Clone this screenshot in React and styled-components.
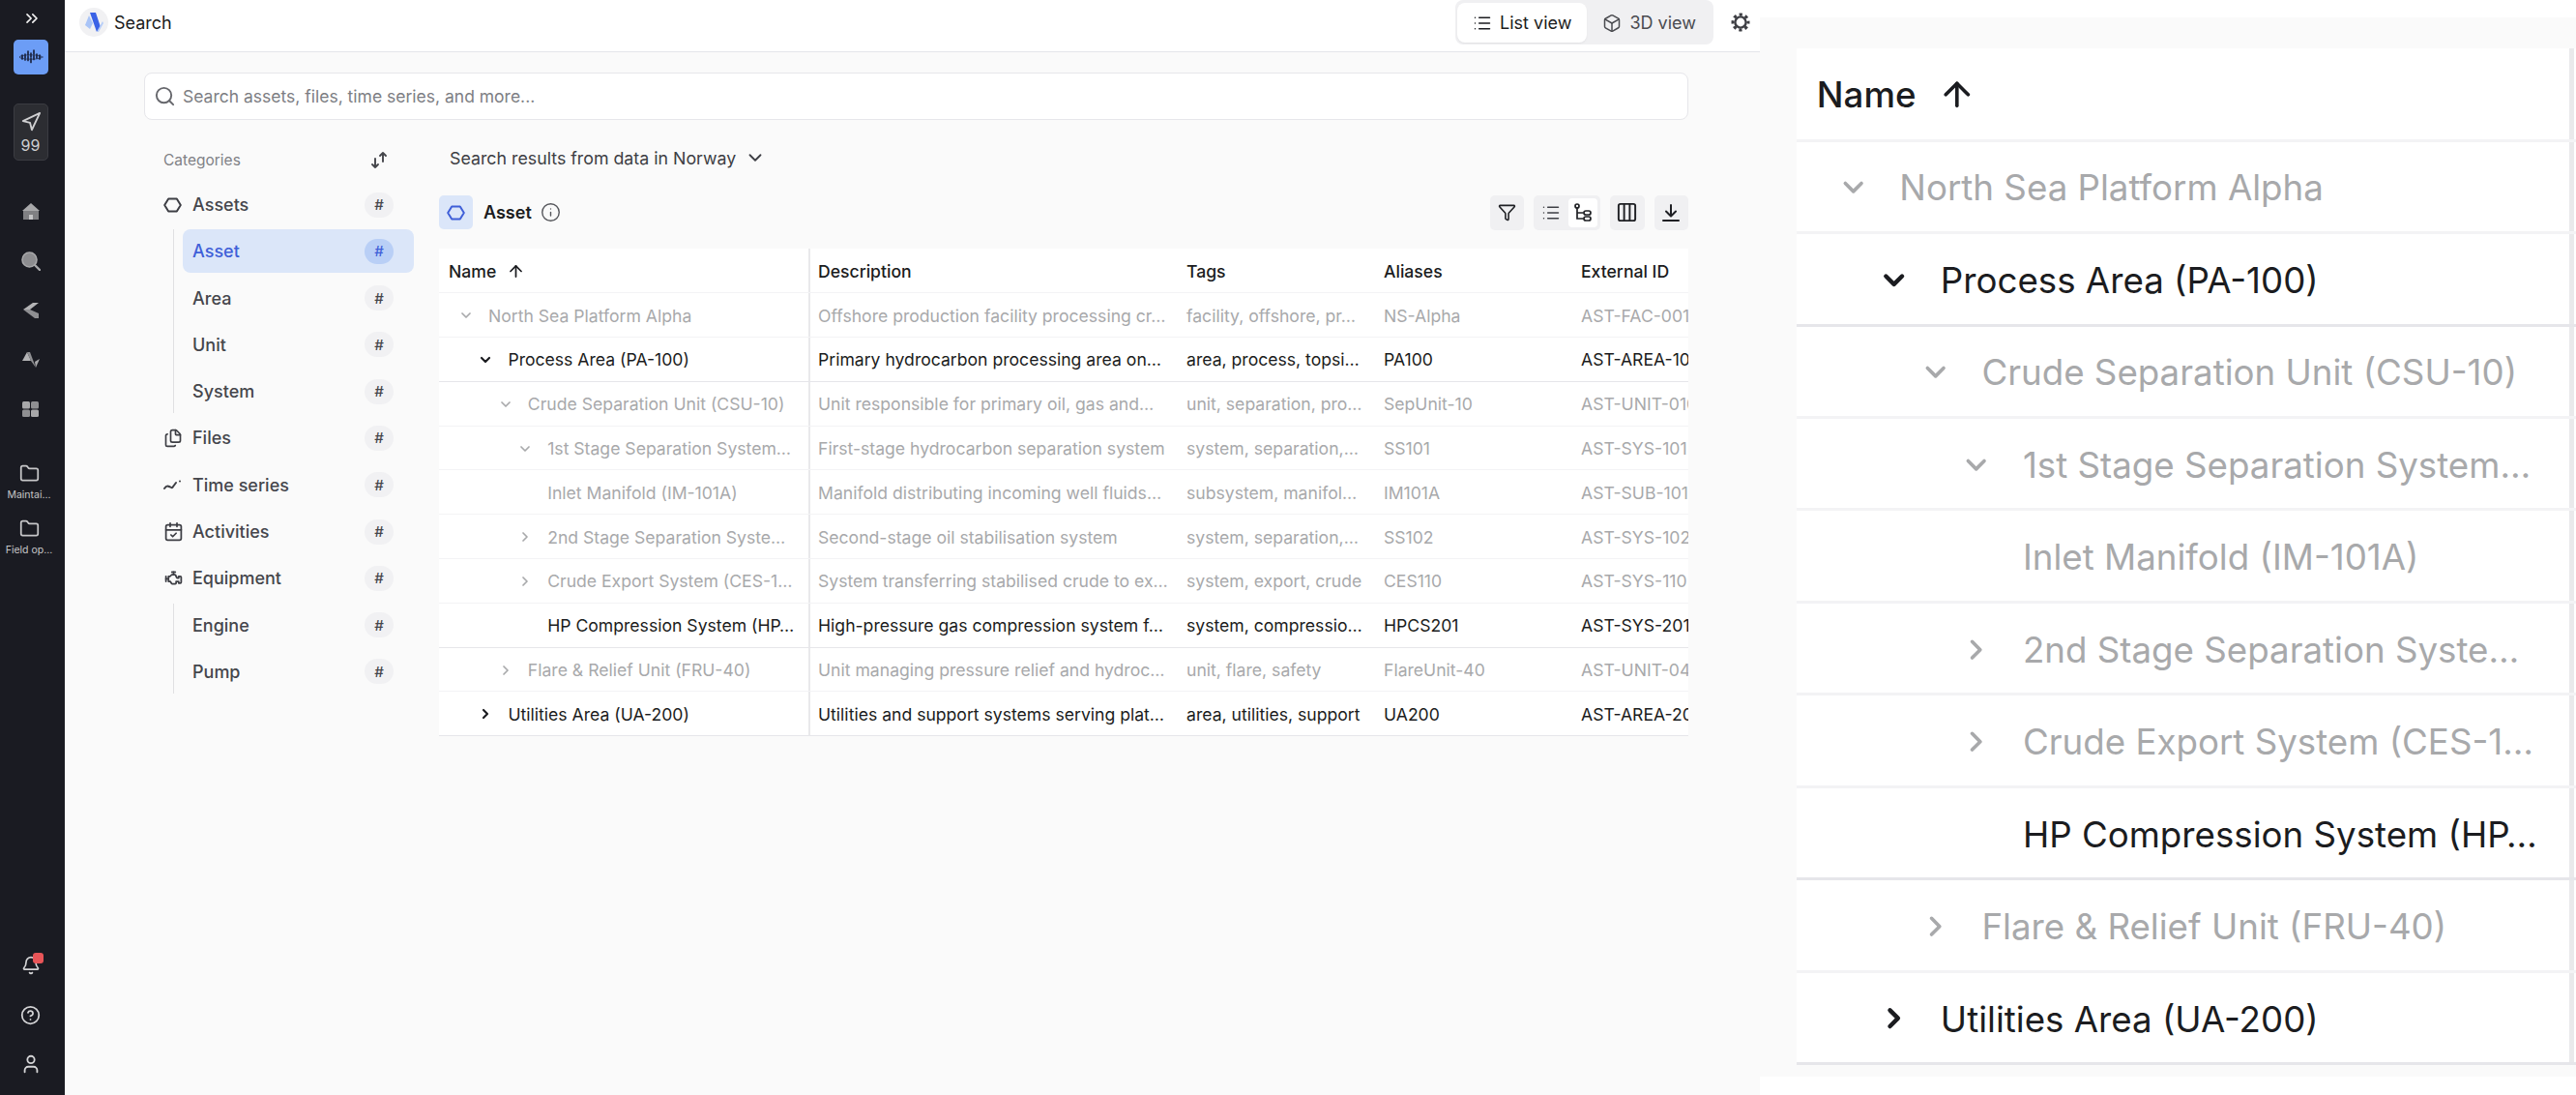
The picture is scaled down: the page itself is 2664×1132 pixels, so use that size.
import React from 'react';
import styled, { createGlobalStyle } from 'styled-components';
import {
  ArrowUp,
  Bell,
  Box,
  CalendarCheck,
  ChevronDown,
  ChevronRight,
  ChevronsRight,
  CircleHelp,
  Columns3,
  Files,
  Folder,
  Funnel,
  Info,
  List,
  Navigation,
  Search,
  User,
} from 'lucide-react';
import { TbEngine } from 'react-icons/tb';

const CATEGORIES = [
  { name: 'Assets', icon: 'hex', children: ['Asset', 'Area', 'Unit', 'System'] },
  { name: 'Files', icon: 'files' },
  { name: 'Time series', icon: 'series' },
  { name: 'Activities', icon: 'activities' },
  { name: 'Equipment', icon: 'equipment', children: ['Engine', 'Pump'] },
];

const ROWS = [
  { level: 0, open: true, dim: true, name: 'North Sea Platform Alpha', desc: 'Offshore production facility processing cr…', tags: 'facility, offshore, pr…', alias: 'NS-Alpha', id: 'AST-FAC-001' },
  { level: 1, open: true, name: 'Process Area (PA-100)', desc: 'Primary hydrocarbon processing area on…', tags: 'area, process, topsi…', alias: 'PA100', id: 'AST-AREA-100' },
  { level: 2, open: true, dim: true, name: 'Crude Separation Unit (CSU-10)', desc: 'Unit responsible for primary oil, gas and…', tags: 'unit, separation, pro…', alias: 'SepUnit-10', id: 'AST-UNIT-010' },
  { level: 3, open: true, dim: true, name: '1st Stage Separation System…', desc: 'First-stage hydrocarbon separation system', tags: 'system, separation,…', alias: 'SS101', id: 'AST-SYS-101' },
  { level: 3, leaf: true, dim: true, name: 'Inlet Manifold (IM-101A)', desc: 'Manifold distributing incoming well fluids…', tags: 'subsystem, manifol…', alias: 'IM101A', id: 'AST-SUB-101' },
  { level: 3, dim: true, name: '2nd Stage Separation Syste…', desc: 'Second-stage oil stabilisation system', tags: 'system, separation,…', alias: 'SS102', id: 'AST-SYS-102' },
  { level: 3, dim: true, name: 'Crude Export System (CES-1…', desc: 'System transferring stabilised crude to ex…', tags: 'system, export, crude', alias: 'CES110', id: 'AST-SYS-110' },
  { level: 3, leaf: true, name: 'HP Compression System (HP…', desc: 'High-pressure gas compression system f…', tags: 'system, compressio…', alias: 'HPCS201', id: 'AST-SYS-201' },
  { level: 2, dim: true, name: 'Flare & Relief Unit (FRU-40)', desc: 'Unit managing pressure relief and hydroc…', tags: 'unit, flare, safety', alias: 'FlareUnit-40', id: 'AST-UNIT-040' },
  { level: 1, name: 'Utilities Area (UA-200)', desc: 'Utilities and support systems serving plat…', tags: 'area, utilities, support', alias: 'UA200', id: 'AST-AREA-200' },
];

const GlobalStyle = createGlobalStyle`
  html, body {
    margin: 0;
    padding: 0;
    background: #fff;
  }
  body {
    font-family: Inter, "Liberation Sans", sans-serif;
    color: #1b1c20;
  }
  * {
    box-sizing: border-box;
  }
`;

const Page = styled.div`
  display: flex;
  width: 2664px;
  height: 1132px;
  overflow: hidden;
`;

const Sidebar = styled.nav`
  flex: 0 0 67px;
  display: flex;
  flex-direction: column;
  align-items: center;
  padding: 9px 4px 0 0;
  background: #1a1b22;
  color: #d4d4d6;
`;

const Collapse = styled.div`
  height: 32px;
  margin-left: 3px;
  display: flex;
  color: #f2f2f2;
`;

const BrandButton = styled.div`
  width: 36px;
  height: 36px;
  display: flex;
  align-items: center;
  justify-content: center;
  border-radius: 5px;
  background: #6c9df6;
`;

const SendBox = styled.div`
  width: 36px;
  height: 59px;
  margin-top: 30px;
  padding-top: 7px;
  display: flex;
  flex-direction: column;
  align-items: center;
  gap: 3px;
  border: 1px solid #3b3c42;
  border-radius: 5px;
  background: #2c2d32;
  font-size: 16px;
  color: #cfcfd1;
`;

const AppIcons = styled.div`
  margin-top: 43px;
  display: flex;
  flex-direction: column;
  align-items: center;
  gap: 31px;
  color: #a3a3a5;
`;

const IconSlot = styled.div`
  height: ${p => p.$height || 20}px;
  display: flex;
  align-items: center;
  justify-content: center;
`;

const Shortcuts = styled.div`
  margin-top: 46px;
  display: flex;
  flex-direction: column;
  gap: 18px;
`;

const Shortcut = styled.div`
  width: 56px;
  display: flex;
  flex-direction: column;
  align-items: center;
  gap: 5px;
  padding-right: 3px;
  font-size: 10.5px;
  line-height: 13px;
  color: #c6c6c8;
  white-space: nowrap;
`;

const SideFooter = styled.div`
  margin-top: auto;
  padding-bottom: 21px;
  display: flex;
  flex-direction: column;
  align-items: center;
  gap: 29px;
`;

const BellWrap = styled.div`
  position: relative;
  height: 22px;
  display: flex;
  align-items: center;
`;

const RedDot = styled.span`
  position: absolute;
  top: -2px;
  right: -3px;
  width: 11px;
  height: 11px;
  border-radius: 3px;
  background: #e85558;
`;

const Workspace = styled.div`
  flex: 0 0 1753px;
  display: flex;
  flex-direction: column;
  background: #fafafa;
`;

const TopBar = styled.header`
  height: 54px;
  flex: none;
  display: flex;
  align-items: flex-start;
  padding-left: 15px;
  border-bottom: 1px solid #e4e5ea;
  background: #fff;
`;

const Brand = styled.div`
  height: 46px;
  display: flex;
  align-items: center;
  gap: 6px;
  font-size: 18px;
`;

const LogoCircle = styled.div`
  width: 30px;
  height: 30px;
  display: flex;
  align-items: center;
  justify-content: center;
  border-radius: 50%;
  background: #f1f1f3;
`;

const ViewSwitch = styled.div`
  margin-left: auto;
  height: 46px;
  display: flex;
  padding: 3px 2px;
  border-radius: 8px;
  background: #f0f0f2;
`;

const ViewTab = styled.div`
  height: 41px;
  display: flex;
  align-items: center;
  gap: 8px;
  padding: 0 16px;
  border-radius: 8px;
  font-size: 18px;
  color: ${p => (p.$active ? '#1b1c20' : '#4a4b50')};
  background: ${p => (p.$active ? '#fff' : 'transparent')};
  box-shadow: ${p => (p.$active ? '0 1px 2px rgba(0, 0, 0, 0.06)' : 'none')};
`;

const GearSlot = styled.div`
  width: 48px;
  height: 46px;
  padding-left: 8px;
  display: flex;
  align-items: center;
  justify-content: center;
  color: #3d3e43;
`;

const SearchBox = styled.div`
  width: 1597px;
  height: 49px;
  margin: 21px 0 0 82px;
  padding-left: 9px;
  flex: none;
  display: flex;
  align-items: center;
  gap: 7px;
  border: 1px solid #e6e6ea;
  border-radius: 8px;
  background: #fff;
  font-size: 17.5px;
  color: #7d7e83;

  svg {
    color: #66676c;
  }
`;

const Body = styled.div`
  margin: 20px 0 0 102px;
  display: flex;
`;

const CategoryPanel = styled.aside`
  width: 285px;
  flex: none;
  display: flex;
  flex-direction: column;
`;

const CategoryHead = styled.div`
  width: 259px;
  height: 42px;
  margin-bottom: 3px;
  padding-right: 26px;
  display: flex;
  align-items: center;
  justify-content: space-between;
  font-size: 15.5px;
  color: #808186;
`;

const CategoryList = styled.div`
  width: 259px;
  display: flex;
  flex-direction: column;
  gap: 3.3px;
`;

const CategoryRow = styled.div`
  height: 45px;
  display: flex;
  align-items: center;
  padding: 0 21px 0 ${p => (p.$sub ? '10px' : '0')};
  border-radius: 8px;
  font-size: 18px;
  font-weight: 500;
  color: ${p => (p.$active ? '#3f5fd8' : '#45464c')};
  background: ${p => (p.$active ? '#dbe6f9' : 'transparent')};
`;

const CategoryIcon = styled.span`
  width: 30px;
  display: flex;
  color: #3d3e44;
`;

const CountBadge = styled.span`
  width: 30px;
  height: 26px;
  margin-left: auto;
  display: flex;
  align-items: center;
  justify-content: center;
  border-radius: 13px;
  font-size: 15px;
  font-weight: 500;
  color: ${p => (p.$active ? '#3f5fd8' : '#45464b')};
  background: ${p => (p.$active ? '#b9cff6' : '#f1f1f3')};
`;

const SubList = styled.div`
  margin-left: 10px;
  padding-left: 9px;
  display: flex;
  flex-direction: column;
  gap: 3.3px;
  border-left: 1.5px solid #e0e0e2;
`;

const Results = styled.section`
  width: 1292px;
  flex: none;
`;

const ScopeLine = styled.div`
  height: 38px;
  padding-left: 11px;
  display: flex;
  align-items: center;
  gap: 9px;
  font-size: 17.8px;
  color: #3d3e44;
`;

const ResultBar = styled.div`
  height: 35px;
  margin: 20px 0;
  display: flex;
  align-items: center;
`;

const TypeBox = styled.div`
  width: 35px;
  height: 35px;
  display: flex;
  align-items: center;
  justify-content: center;
  border-radius: 5px;
  background: #dbe6f9;
  color: #3f5fd8;
`;

const TypeName = styled.strong`
  margin: 0 9px 0 11px;
  font-size: 18px;
  font-weight: 600;
`;

const Tools = styled.div`
  margin-left: auto;
  display: flex;
  gap: 10px;
`;

const ToolButton = styled.div`
  width: 35.5px;
  height: 36px;
  display: flex;
  align-items: center;
  justify-content: center;
  border-radius: 5px;
  background: #f0f0f2;
  color: #1f2024;
`;

const ToolToggle = styled.div`
  width: 69px;
  height: 36px;
  padding: 3px;
  display: flex;
  align-items: center;
  justify-content: space-between;
  border-radius: 5px;
  background: #f0f0f2;
  color: #3d3e44;
`;

const TogglePart = styled.span`
  width: 30px;
  height: 30px;
  display: flex;
  align-items: center;
  justify-content: center;
  border-radius: 4px;
  color: ${p => (p.$active ? '#1f2024' : '#3d3e44')};
  background: ${p => (p.$active ? '#fff' : 'transparent')};
`;

/* the same table is drawn twice, --s is the magnification */
const TableFrame = styled.div`
  --s: ${p => p.$scale};
  --name: ${p => p.$nameWidth}px;
  width: ${p => p.$width}px;
  overflow: hidden;
  background: #fff;
`;

const TableRow = styled.div`
  display: grid;
  grid-template-columns: var(--name) 381px 204px 204px 204px;
  height: calc(${p => (p.$head ? 46.3 : 45.8)}px * var(--s));
  padding-top: calc(1px * var(--s));
  border-bottom: calc(1.5px * var(--s)) solid ${p => (p.$strong ? '#e6e6ea' : '#f3f3f5')};
  font-size: calc(17.6px * var(--s));
  font-weight: ${p => (p.$head ? 500 : 400)};
  color: ${p => (p.$dim ? '#a8a9ab' : '#1b1c20')};
`;

const Cell = styled.div`
  display: flex;
  align-items: center;
  padding-left: 8px;
  overflow: hidden;
  white-space: nowrap;
`;

const NameCell = styled.div`
  display: flex;
  align-items: center;
  margin-top: calc(-1px * var(--s));
  padding: calc(1px * var(--s)) 0 0 calc(${p => 20 + p.$level * 20.4}px * var(--s));
  border-right: calc(2.7px * var(--s)) solid #e9e9eb;
  overflow: hidden;
  white-space: nowrap;
`;

const HeadName = styled(NameCell)`
  padding-left: calc(10px * var(--s));
  gap: calc(11px * var(--s));
`;

const Toggle = styled.span`
  flex: none;
  width: calc(16px * var(--s));
  height: calc(16px * var(--s));
  margin-right: calc(15px * var(--s));
  display: flex;
  color: ${p => (p.$dim ? '#a8a9ab' : '#1b1c20')};

  svg {
    width: 100%;
    height: 100%;
  }
`;

const SortArrow = styled(ArrowUp)`
  width: calc(19px * var(--s));
  height: calc(19px * var(--s));
`;

const SidePanel = styled.div`
  flex: 1;
  min-width: 0;
  padding: 18px 0 19px;
  display: flex;
`;

const SideCanvas = styled.div`
  flex: 1;
  padding: 32px 0 0 38px;
  background: #fafafa;
`;

function Logo() {
  return (
    <svg width="22" height="24" viewBox="0 0 22 24">
      <path d="M2 15 6 5l4 8-3 6z" fill="#a9c4f7" />
      <path d="M7 2h6l5 15-4 5z" fill="#3b62e6" />
      <path d="M14 22l6-11 1 2-5 9z" fill="#b6cdf8" />
    </svg>
  );
}

function WaveMark() {
  return (
    <svg width="26" height="16" viewBox="0 0 26 16" stroke="#1a2440" strokeLinecap="round" fill="none">
      <ellipse cx="13" cy="8" rx="12" ry="2.2" strokeWidth="0.7" />
      <path d="M4 6v4M7 5v6M10 2v11M13 4v11M16 1v11M19 5v5M22 6v4" strokeWidth="1.7" strokeDasharray="4 1.5" />
    </svg>
  );
}

function HomeIcon() {
  return (
    <svg width="20" height="20" viewBox="0 0 20 20">
      <path d="M10 1 1 9h18z" fill="#a8a8aa" />
      <path d="M2 9h16v9H2z" fill="#808083" />
      <path d="M8 13h4v5H8z" fill="#c4c4c6" />
    </svg>
  );
}

function LensIcon() {
  return (
    <svg width="20" height="20" viewBox="0 0 20 20">
      <circle cx="8.5" cy="8.5" r="7.5" fill="#8d8d90" stroke="#a8a8aa" strokeWidth="1.6" />
      <path d="m14 14 5 5" stroke="#a8a8aa" strokeWidth="2.4" strokeLinecap="round" />
    </svg>
  );
}

function StackIcon() {
  return (
    <svg width="18" height="18" viewBox="0 0 18 18">
      <path d="M11 1h6L8 8H1z" fill="#b4b4b6" />
      <path d="M1 8h7l9 4v5h-4z" fill="#8f8f92" />
    </svg>
  );
}

function PulseIcon() {
  return (
    <svg width="20" height="20" viewBox="0 0 20 20">
      <path d="M1 11 6 2l4 9H1z" fill="#b4b4b6" />
      <path d="M6 2h3l6 16-5-7z" fill="#8f8f92" />
      <path d="m15 18 4-9-5 3z" fill="#a8a8aa" />
    </svg>
  );
}

function TilesIcon() {
  return (
    <svg width="19" height="18" viewBox="0 0 19 18">
      <rect x="1" y="1" width="8" height="7.5" rx="1.5" fill="#a8a8aa" />
      <rect x="10" y="1" width="8" height="7.5" rx="1.5" fill="#8f8f92" />
      <rect x="1" y="9.5" width="8" height="7.5" rx="1.5" fill="#8f8f92" />
      <rect x="10" y="9.5" width="8" height="7.5" rx="1.5" fill="#a8a8aa" />
    </svg>
  );
}

function GearIcon() {
  return (
    <svg width="20" height="20" viewBox="0 0 20 20" fill="none" stroke="currentColor">
      <circle cx="10" cy="10" r="5.6" strokeWidth="2.4" />
      <circle cx="10" cy="10" r="8" strokeWidth="3" strokeDasharray="3.2 3.08" strokeDashoffset="1.6" />
    </svg>
  );
}

function SwapIcon() {
  return (
    <svg width="19" height="19" viewBox="0 0 19 19" fill="none" stroke="#45464b" strokeWidth="1.9" strokeLinecap="round" strokeLinejoin="round">
      <path d="M5 8v9M2 14l3 3 3-3" />
      <path d="M13 2v9M10 5l3-3 3 3" />
    </svg>
  );
}

function SeriesIcon() {
  return (
    <svg width="19" height="19" viewBox="0 0 19 19" fill="none" stroke="#3d3e44" strokeWidth="2" strokeLinecap="round" strokeLinejoin="round">
      <path d="M1 13c2-3 3-3 5-2s3 2 4 0l3-4" />
      <path d="M17 5.5h.01" />
    </svg>
  );
}

function TreeIcon() {
  return (
    <svg width="20" height="20" viewBox="0 0 20 20" fill="none" stroke="currentColor" strokeWidth="1.7" strokeLinecap="round">
      <circle cx="4" cy="3" r="2" />
      <path d="M4 5v11h6M4 10h6" />
      <rect x="11" y="8" width="7" height="4" rx="2" />
      <rect x="11" y="14" width="7" height="4" rx="2" />
    </svg>
  );
}

function DownloadIcon() {
  return (
    <svg width="20" height="20" viewBox="0 0 20 20" fill="none" stroke="currentColor" strokeWidth="2" strokeLinecap="round" strokeLinejoin="round">
      <path d="M10 2v11M5 8.5l5 5 5-5" />
      <path d="M2 18h16" />
    </svg>
  );
}

function WideHexagon() {
  return (
    <svg width="19" height="16" viewBox="0 0 19 16" fill="none" stroke="currentColor" strokeWidth="2" strokeLinejoin="round">
      <path d="M5.2 1.5h8.6l4 6.5-4 6.5H5.2l-4-6.5z" />
    </svg>
  );
}

const categoryIcons = {
  hex: <WideHexagon />,
  files: <Files size={20} strokeWidth={2} />,
  series: <SeriesIcon />,
  activities: <CalendarCheck size={21} strokeWidth={2} />,
  equipment: <TbEngine size={21} />,
};

function Category({ item }) {
  return (
    <>
      <CategoryRow>
        <CategoryIcon>{categoryIcons[item.icon]}</CategoryIcon>
        {item.name}
        <CountBadge>#</CountBadge>
      </CategoryRow>
      {item.children && (
        <SubList>
          {item.children.map(child => (
            <CategoryRow key={child} $sub $active={child === 'Asset'}>
              {child}
              <CountBadge $active={child === 'Asset'}>#</CountBadge>
            </CategoryRow>
          ))}
        </SubList>
      )}
    </>
  );
}

function NameColumn({ row }) {
  const stroke = row.dim ? 2.6 : 3.2;
  return (
    <NameCell $level={row.level}>
      <Toggle $dim={row.dim}>
        {!row.leaf && (row.open ? <ChevronDown strokeWidth={stroke} /> : <ChevronRight strokeWidth={stroke} />)}
      </Toggle>
      {row.name}
    </NameCell>
  );
}

function AssetTable({ scale, width, nameWidth, nameOnly }) {
  const strong = [1, 7, 9];
  return (
    <TableFrame $scale={scale} $width={width} $nameWidth={nameWidth}>
      <TableRow $head>
        <HeadName $level={0}>
          Name
          <SortArrow strokeWidth={2.2} />
        </HeadName>
        {!nameOnly && (
          <>
            <Cell>Description</Cell>
            <Cell>Tags</Cell>
            <Cell>Aliases</Cell>
            <Cell>External ID</Cell>
          </>
        )}
      </TableRow>
      {ROWS.map((row, index) => (
        <TableRow key={row.name} $dim={row.dim} $strong={strong.includes(index)}>
          <NameColumn row={row} />
          {!nameOnly && (
            <>
              <Cell>{row.desc}</Cell>
              <Cell>{row.tags}</Cell>
              <Cell>{row.alias}</Cell>
              <Cell>{row.id}</Cell>
            </>
          )}
        </TableRow>
      ))}
    </TableFrame>
  );
}

export default function App() {
  return (
    <Page>
      <GlobalStyle />
      <Sidebar>
        <Collapse>
          <ChevronsRight size={20} strokeWidth={2} />
        </Collapse>
        <BrandButton>
          <WaveMark />
        </BrandButton>
        <SendBox>
          <Navigation size={22} strokeWidth={2} />
          99
        </SendBox>
        <AppIcons>
          <IconSlot><HomeIcon /></IconSlot>
          <IconSlot><LensIcon /></IconSlot>
          <IconSlot><StackIcon /></IconSlot>
          <IconSlot><PulseIcon /></IconSlot>
          <IconSlot><TilesIcon /></IconSlot>
        </AppIcons>
        <Shortcuts>
          <Shortcut>
            <Folder size={21} strokeWidth={2} />
            Maintai...
          </Shortcut>
          <Shortcut>
            <Folder size={21} strokeWidth={2} />
            Field op...
          </Shortcut>
        </Shortcuts>
        <SideFooter>
          <BellWrap>
            <Bell size={20} strokeWidth={2} />
            <RedDot />
          </BellWrap>
          <IconSlot $height={22}><CircleHelp size={21} strokeWidth={2} /></IconSlot>
          <IconSlot $height={22}><User size={22} strokeWidth={2} /></IconSlot>
        </SideFooter>
      </Sidebar>

      <Workspace>
        <TopBar>
          <Brand>
            <LogoCircle>
              <Logo />
            </LogoCircle>
            Search
          </Brand>
          <ViewSwitch>
            <ViewTab $active>
              <List size={20} strokeWidth={1.8} />
              List view
            </ViewTab>
            <ViewTab>
              <Box size={20} strokeWidth={1.8} />
              3D view
            </ViewTab>
          </ViewSwitch>
          <GearSlot>
            <GearIcon />
          </GearSlot>
        </TopBar>

        <SearchBox>
          <Search size={23} strokeWidth={2} />
          Search assets, files, time series, and more...
        </SearchBox>

        <Body>
          <CategoryPanel>
            <CategoryHead>
              Categories
              <SwapIcon />
            </CategoryHead>
            <CategoryList>
              {CATEGORIES.map(item => (
                <Category key={item.name} item={item} />
              ))}
            </CategoryList>
          </CategoryPanel>

          <Results>
            <ScopeLine>
              Search results from data in Norway
              <ChevronDown size={22} strokeWidth={2} />
            </ScopeLine>
            <ResultBar>
              <TypeBox>
                <WideHexagon />
              </TypeBox>
              <TypeName>Asset</TypeName>
              <Info size={21} strokeWidth={1.6} color="#55565b" />
              <Tools>
                <ToolButton>
                  <Funnel size={19} strokeWidth={2} />
                </ToolButton>
                <ToolToggle>
                  <TogglePart>
                    <List size={20} strokeWidth={1.8} />
                  </TogglePart>
                  <TogglePart $active>
                    <TreeIcon />
                  </TogglePart>
                </ToolToggle>
                <ToolButton>
                  <Columns3 size={23} strokeWidth={2} />
                </ToolButton>
                <ToolButton>
                  <DownloadIcon />
                </ToolButton>
              </Tools>
            </ResultBar>
            <AssetTable scale={1} width={1292} nameWidth={384} />
          </Results>
        </Body>
      </Workspace>

      <SidePanel>
        <SideCanvas>
          <AssetTable scale={2.085} width={806} nameWidth={804} nameOnly />
        </SideCanvas>
      </SidePanel>
    </Page>
  );
}
